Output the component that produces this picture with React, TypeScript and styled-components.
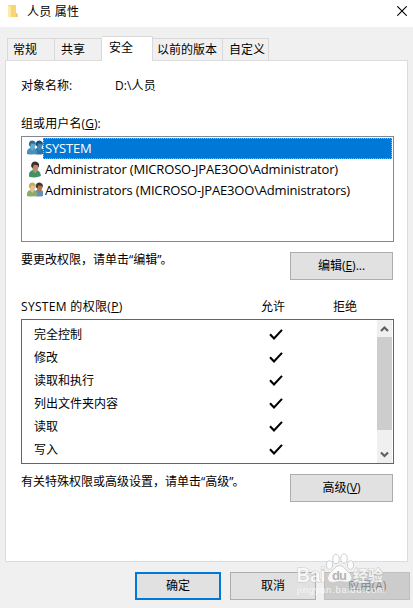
import React from "react";
import styled, { createGlobalStyle, css } from "styled-components";

const Global = createGlobalStyle`
  * { box-sizing: border-box; }
  body { margin: 0; background: #f0f0f0; overflow: hidden; }
`;

const Dialog = styled.div`
  position: relative;
  width: 413px;
  height: 608px;
  display: flex;
  flex-direction: column;
  background: #f0f0f0;
  color: #000;
  font: 12px/16px "Open Sans", "Noto Sans CJK SC", sans-serif;
  white-space: nowrap;
`;

const TitleBar = styled.header`
  height: 27px;
  flex: none;
  display: flex;
  align-items: flex-start;
  background: #fff;
  padding: 4px 6px 0 8px;
`;

const FolderIcon = styled.svg`
  margin-top: 1px;
`;

const Title = styled.h1`
  flex: 1;
  margin: 0 0 0 9px;
  font: inherit;
  letter-spacing: 0.2px;
`;

const CloseIcon = styled.svg`
  margin-top: 2px;
`;

const Tabs = styled.nav`
  height: 24px;
  flex: none;
  display: flex;
  align-items: flex-end;
  margin: 9px 0 0 7px;
`;

const Tab = styled.div<{ $width: number; $active?: boolean; $pad?: number }>`
  width: ${(p) => p.$width}px;
  height: 22px;
  padding: 3px 0 0 ${(p) => p.$pad ?? 5}px;
  border-top: 1px solid #d9d9d9;
  border-right: 1px solid #d9d9d9;
  &:first-child { border-left: 1px solid #d9d9d9; }
  ${(p) =>
    p.$active &&
    css`
      height: 25px;
      margin-bottom: -1px;
      padding-top: 3px;
      background: #fff;
      z-index: 1;
    `}
`;

const Page = styled.main`
  width: 403px;
  height: 502px;
  flex: none;
  margin-left: 5px;
  padding: 17px 13px 0 15px;
  border: 1px solid #dcdcdc;
  background: #fff;
`;

const Line = styled.div<{ $height: number }>`
  display: flex;
  height: ${(p) => p.$height}px;
`;

const Label = styled.span<{ $width?: number; $spacing?: number; $top?: number }>`
  width: ${(p) => (p.$width ? `${p.$width}px` : "auto")};
  flex: ${(p) => (p.$width ? "none" : 1)};
  letter-spacing: ${(p) => p.$spacing ?? 0}px;
  padding-top: ${(p) => p.$top ?? 0}px;
`;

const ClosingMark = styled.span`
  letter-spacing: -1px;
`;

const UserList = styled.ul`
  width: 373px;
  height: 106px;
  margin: 0;
  padding: 1px;
  list-style: none;
  border: 1px solid #828790;
`;

const User = styled.li`
  display: flex;
  height: 21px;
  padding-left: 4px;
`;

const UserName = styled.span<{ $selected?: boolean }>`
  width: 349px;
  padding: 1px 0 0 1px;
  border: 1px dotted ${(p) => (p.$selected ? "#ff9632" : "transparent")};
  background: ${(p) => (p.$selected ? "#0078d7" : "transparent")};
  color: ${(p) => (p.$selected ? "#fff" : "#000")};
  font-size: 13px;
  letter-spacing: -0.18px;
`;

const UserIcon = styled.svg`
  flex: none;
  margin-top: 2px;
`;

const Button = styled.button<{ $kind?: "primary" | "disabled"; $width?: number }>`
  width: ${(p) => p.$width ?? 86}px;
  height: 28px;
  flex: none;
  padding: 0;
  font: inherit;
  color: ${(p) => (p.$kind === "disabled" ? "#838383" : "#000")};
  background: ${(p) => (p.$kind === "disabled" ? "#ccc" : "#e1e1e1")};
  border: ${(p) =>
    p.$kind === "primary" ? "2px solid #0078d7" : p.$kind === "disabled" ? "1px solid #bfbfbf" : "1px solid #adadad"};
`;

const ButtonSlot = styled.div`
  padding-top: 10px;
`;

const PermissionBox = styled.div`
  display: flex;
  width: 373px;
  height: 145px;
  border: 1px solid #646464;
`;

const PermissionList = styled.div`
  flex: 1;
  padding-top: 3px;
`;

const Permission = styled.div`
  display: grid;
  grid-template-columns: 235px 1fr;
  align-items: center;
  height: 23px;
  padding-left: 12px;
`;

const ScrollBar = styled.div`
  width: 15px;
  margin-right: 1px;
  display: flex;
  flex-direction: column;
  background: #f0f0f0;
`;

const Thumb = styled.div`
  height: 93px;
  margin-bottom: auto;
  background: #cdcdcd;
`;

const Arrow = styled.svg`
  display: block;
`;

const Footer = styled.footer`
  display: grid;
  grid-template-columns: 95px 94px 86px;
  margin: 10px 0 0 135px;
`;

const Watermark = styled.svg`
  position: absolute;
  left: 290px;
  top: 550px;
  pointer-events: none;
`;

type PersonProps = { x: number; y: number; hair: string; skin: string; body: string; s?: number };

function Person({ x, y, hair, skin, body, s = 1 }: PersonProps) {
  return (
    <g transform={`translate(${x} ${y}) scale(${s})`}>
      <path d="M0 10 Q0 7 3 6.3 L6 6.3 Q9 7 9.3 11 Q5 13 0 11.5 Z" fill={body} />
      <path d="M3 5 L6.3 5 L6.5 7 L4.8 9 L3 7 Z" fill={skin} />
      <ellipse cx="4.9" cy="3.6" rx="2.5" ry="3.3" fill={skin} />
      <path d="M1.8 4 C1 -.5 5 -1 6.5 .2 C8.2 1 8 3 7.5 4.2 L6.7 2.5 L3.8 2.2 L3 4.6 Z" fill={hair} />
    </g>
  );
}

function Check() {
  return (
    <svg width="14" height="12" viewBox="0 0 14 12">
      <path d="M1 5.2 L5 9.5 L13 .9" fill="none" stroke="#000" strokeWidth="2.1" />
    </svg>
  );
}

const permissions = ["完全控制", "修改", "读取和执行", "列出文件夹内容", "读取", "写入"];

export default function App() {
  return (
    <Dialog>
      <Global />
      <TitleBar>
        <FolderIcon width="10" height="14" viewBox="0 0 10 14">
          <path d="M0 0 H8 V8 L9.5 9 V12 H3 L0 11 Z" fill="#f7d474" />
          <path d="M0 0 L3 2 V13 L0 11.5 Z" fill="#ffe9a4" />
          <path d="M8 8 L9.5 9 V12 H8 Z" fill="#edc55f" />
        </FolderIcon>
        <Title>人员 属性</Title>
        <CloseIcon width="10" height="10" viewBox="0 0 10 10">
          <path d="M.3 .3 L9.7 9.7 M9.7 .3 L.3 9.7" stroke="#000" strokeWidth="1.1" />
        </CloseIcon>
      </TitleBar>
      <Tabs>
        <Tab $width={48}>常规</Tab>
        <Tab $width={47} $pad={6}>共享</Tab>
        <Tab $width={51} $pad={7} $active>安全</Tab>
        <Tab $width={70} $pad={4}>以前的版本</Tab>
        <Tab $width={46} $pad={6}>自定义</Tab>
      </Tabs>
      <Page>
        <Line $height={38}>
          <Label $width={94}>对象名称:</Label>
          <Label $spacing={0.1}>D:\人员</Label>
        </Line>
        <Line $height={20}>
          <Label $spacing={0.1}>组或用户名(<u>G</u>):</Label>
        </Line>
        <UserList>
          <User>
            <UserIcon width="16" height="16" viewBox="0 0 16 16">
              <Person x={7} y={1} s={1.12} hair="#174f7b" skin="#3d84b8" body="#2872a8" />
              <Person x={0} y={1} s={1.12} hair="#2a6d96" skin="#66a9cc" body="#488fba" />
            </UserIcon>
            <UserName $selected>SYSTEM</UserName>
          </User>
          <User>
            <UserIcon width="16" height="18" viewBox="0 0 16 18">
              <Person x={2} y={1} s={1.28} hair="#3c302b" skin="#b88d70" body="#3c9364" />
            </UserIcon>
            <UserName>Administrator (MICROSO-JPAE3OO\Administrator)</UserName>
          </User>
          <User>
            <UserIcon width="16" height="16" viewBox="0 0 16 16">
              <Person x={7} y={1} s={1.12} hair="#43352c" skin="#a97752" body="#688fb5" />
              <Person x={0} y={1} s={1.12} hair="#c4ad54" skin="#e0c499" body="#8aac68" />
            </UserIcon>
            <UserName>Administrators (MICROSO-JPAE3OO\Administrators)</UserName>
          </User>
        </UserList>
        <Line $height={57}>
          <Label $width={269} $top={10}>要更改权限，请单击“编辑<ClosingMark>”</ClosingMark>。</Label>
          <ButtonSlot><Button $width={103}>编辑(<u>E</u>)...</Button></ButtonSlot>
        </Line>
        <Line $height={20}>
          <Label $width={240} $spacing={0.33}>SYSTEM 的权限(<u>P</u>)</Label>
          <Label $width={72}>允许</Label>
          <Label>拒绝</Label>
        </Line>
        <PermissionBox>
          <PermissionList>
            {permissions.map((name) => (
              <Permission key={name}>
                <span>{name}</span>
                <Check />
              </Permission>
            ))}
          </PermissionList>
          <ScrollBar>
            <Arrow width="15" height="17" viewBox="0 0 15 17">
              <path d="M4 11 L7.5 7.5 L11 11" fill="none" stroke="#606060" strokeWidth="2.2" />
            </Arrow>
            <Thumb />
            <Arrow width="15" height="17" viewBox="0 0 15 17">
              <path d="M4 6.5 L7.5 10 L11 6.5" fill="none" stroke="#606060" strokeWidth="2.2" />
            </Arrow>
          </ScrollBar>
        </PermissionBox>
        <Line $height={60}>
          <Label $width={269} $top={10}>有关特殊权限或高级设置，请单击“高级<ClosingMark>”</ClosingMark>。</Label>
          <ButtonSlot><Button $width={103}>高级(<u>V</u>)</Button></ButtonSlot>
        </Line>
      </Page>
      <Footer>
        <Button $kind="primary">确定</Button>
        <Button>取消</Button>
        <Button $kind="disabled">应用(A)</Button>
      </Footer>
      <Watermark width="123" height="50" viewBox="0 0 123 50">
        <g fill="#fff" fillOpacity=".85" stroke="#c4c4c4" strokeWidth=".8">
          <ellipse cx="39.5" cy="15" rx="3" ry="4.2" />
          <ellipse cx="46" cy="9" rx="3.2" ry="4.6" />
          <ellipse cx="54" cy="8.5" rx="3.2" ry="4.6" />
          <ellipse cx="60.5" cy="15" rx="3" ry="4.2" />
          <path d="M43 20 Q50 11 56 20 Q62 24 62 28 Q61 33 54 32 Q50 31 46 32 Q38 34 37.5 28 Q37.5 24 43 20 Z" />
        </g>
        <g fill="#fff" fillOpacity=".8" fontFamily="Liberation Sans, Noto Sans CJK SC, sans-serif" fontWeight="700">
          <g stroke="#b5b5b5" strokeWidth="1.2" strokeOpacity=".6" paintOrder="stroke">
            <text x="6.5" y="32" fontSize="21" textLength="29" lengthAdjust="spacingAndGlyphs">Bai</text>
            <text x="63" y="31" fontSize="15" textLength="30">经验</text>
          </g>
          <text x="42" y="30" fontSize="13" fill="#b5b5b5" fillOpacity="1" textLength="15">du</text>
          <text x="7" y="43" fontSize="9.5" fontWeight="400" textLength="88">jingyan.baidu.com</text>
        </g>
      </Watermark>
    </Dialog>
  );
}
